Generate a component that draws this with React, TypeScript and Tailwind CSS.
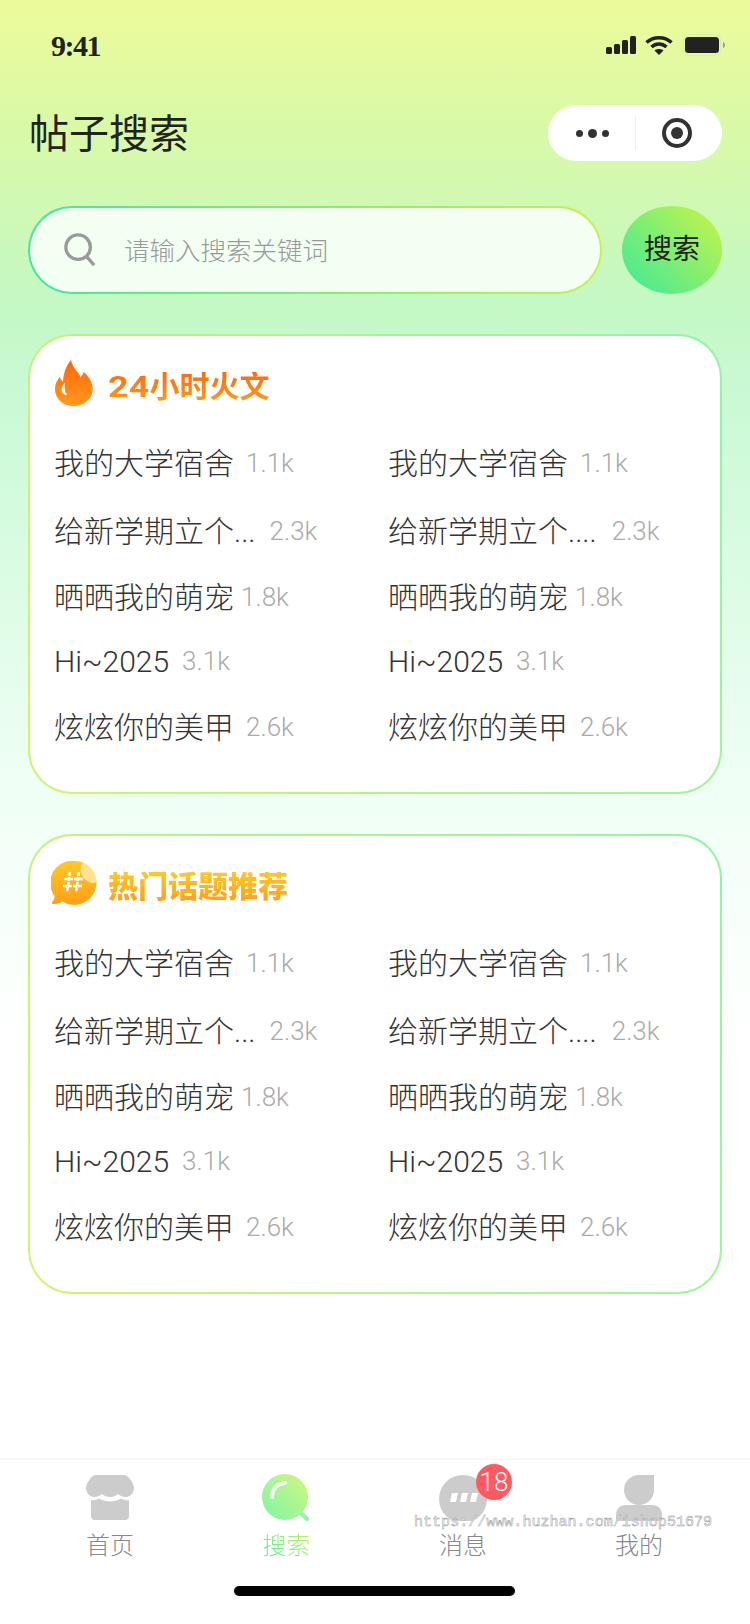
import { ReactNode } from "react";

const rows = [
  { t: "我的大学宿舍", n: "1.1k", ml: "ml-[12px]", ml2: "ml-[12px]" },
  { t: "给新学期立个...", n: "2.3k", ml: "ml-[14px]", ml2: "ml-[15px]" },
  { t: "晒晒我的萌宠", n: "1.8k", ml: "ml-[7px]", ml2: "ml-[7px]" },
  { t: "Hi~2025", n: "3.1k", ml: "ml-[13px]", ml2: "ml-[13px]" },
  { t: "炫炫你的美甲", n: "2.6k", ml: "ml-[12px]", ml2: "ml-[12px]" },
];

function Flame() {
  return (
    <svg width="38" height="46" viewBox="0 0 38 46">
      <defs>
        <linearGradient id="fl" x1="0" y1="0" x2="0" y2="1">
          <stop offset="0" stopColor="#ff6608" />
          <stop offset="1" stopColor="#ff9a1e" />
        </linearGradient>
      </defs>
      <path
        d="M16 0c1 5 3 8 6 11.500 1.500 1.800 2.800 3.500 3.500 5.500 1.500-1.300 2.800-3.300 3.200-5 5 4 9 10.500 9 17 0 9.500-8 17-19 17S0 38.500 0 29c0-5.500 2.500-9.500 5-12 .5 2 1.500 3.500 3 4.500C8.500 13 11 6 16 0z"
        fill="url(#fl)"
      />
      <path d="M10 23c-3 2-4 6-3 9 1 1.800 3 3 5 3-2-2.500-3-7-2-12z" fill="#fff" />
    </svg>
  );
}

function Bubble() {
  return (
    <svg width="46" height="46" viewBox="0 0 46 46">
      <defs>
        <linearGradient id="bb" x1="0" y1="0" x2="0" y2="1">
          <stop offset="0" stopColor="#ffc925" />
          <stop offset="1" stopColor="#ff9f18" />
        </linearGradient>
      </defs>
      <path
        d="M23.500 1a22 22 0 1 1-12 40.500c-2.500 1.500-6 2.800-9.500 2.500-1.500-.3-1.500-1.500-.5-2.500 1.500-1.500 2-3.500 2-5.500A22 22 0 0 1 23.500 1z"
        fill="url(#bb)"
      />
      <path d="M32 2.500a22 22 0 0 1 13.500 20 13 13 0 0 1-13.500-20z" fill="#ffe38f" />
      <path
        d="M19 12l-3 20M28 12l-3 20M13 19h19M12 26h19"
        stroke="#fff"
        strokeWidth="2.500"
        strokeDasharray="4 1"
        fill="none"
      />
    </svg>
  );
}

function StatusIcons() {
  return (
    <div className="flex items-center">
      <svg width="32" height="20" viewBox="0 0 32 20" fill="#222">
        <rect x="1" y="12" width="6" height="7" rx="1.500" />
        <rect x="9" y="9" width="6" height="10" rx="1.500" />
        <rect x="17" y="5" width="6" height="14" rx="1.500" />
        <rect x="25" y="1" width="6" height="18" rx="1.500" />
      </svg>
      <svg className="ml-[8px]" width="28" height="20" viewBox="0 0 28 20" fill="none" stroke="#222" strokeWidth="3.500">
        <path d="M1.500 7.500c7-6.500 18-6.500 25 0" />
        <path d="M6.500 12c4.500-4 10.500-4 15 0" />
        <path d="M14 20l-4.500-4.500c2.500-2 6.500-2 9 0z" fill="#222" stroke="none" />
      </svg>
      <svg className="ml-[10px]" width="44" height="22" viewBox="0 0 44 22">
        <rect x="0.500" y="0.500" width="37" height="21" rx="5" fill="none" stroke="#dcecb0" />
        <rect x="2" y="3" width="34" height="16" rx="3.500" fill="#222" />
        <path d="M40 8c1.500.5 2 2 2 3s-.5 2.500-2 3z" fill="#9aa77a" />
      </svg>
    </div>
  );
}

function Card({ icon, title, titleClass }: { icon: ReactNode; title: ReactNode; titleClass: string }) {
  return (
    <div className="h-[460px] rounded-[44px] bg-[linear-gradient(65deg,#d0f56a,#8ff5a5)] p-[2px]">
      <div className="h-full rounded-[42px] bg-white px-[24px] pt-[24px]">
        <div className="flex h-[50px] items-center">
          <div className="flex w-[54px] shrink-0 items-center">{icon}</div>
          <span className={`mt-[3px] bg-clip-text text-[30px] leading-none text-transparent ${titleClass}`}>
            {title}
          </span>
        </div>
        <div className="mt-[20px] grid grid-cols-[334px_1fr] grid-rows-[66px_70px_62px_66px_66px]">
          {rows.map((r, i) => [
            <div key={`l${i}`} className="flex items-center">
              <span className="text-[30px] font-light text-[#333]">{r.t}</span>
              <span className={`${r.ml} text-[26px] font-light text-[#aaa]`}>{r.n}</span>
            </div>,
            <div key={`r${i}`} className="flex items-center">
              <span className="text-[30px] font-light text-[#333]">{i === 1 ? "给新学期立个...." : r.t}</span>
              <span className={`${r.ml2} text-[26px] font-light text-[#aaa]`}>{r.n}</span>
            </div>,
          ])}
        </div>
      </div>
    </div>
  );
}

export default function App() {
  return (
    <div className="relative flex h-[1624px] w-[750px] flex-col overflow-hidden bg-[linear-gradient(180deg,#ecfb9b_0px,#d8f9a8_140px,#c4f8c4_300px,#c9f9d4_390px,#f0fff6_790px,#ffffff_1050px)] font-['Roboto','Noto_Sans_CJK_SC',sans-serif]">
      {/* STATUS BAR */}
      <div className="flex h-[90px] items-center justify-between pl-[51px] pr-[23px]">
        <span className="font-['Liberation_Serif',serif] text-[30px] font-bold tracking-[-1.500px] text-[#222]">9:41</span>
        <StatusIcons />
      </div>

      {/* NAV */}
      <div className="mt-[15px] flex h-[56px] items-center justify-between pl-[29px] pr-[28px]">
        <h1 className="mt-[4px] text-[40px] font-normal text-[#222]">帖子搜索</h1>
        <div className="flex h-[56px] w-[174px] items-center rounded-full bg-white">
          <div className="flex w-[87px] items-center justify-center gap-[5px] pl-[2px]">
            <span className="size-[7px] rounded-full bg-[#333]" />
            <span className="size-[9px] rounded-full bg-[#333]" />
            <span className="size-[7px] rounded-full bg-[#333]" />
          </div>
          <div className="h-[34px] w-px bg-[#eee]" />
          <div className="flex flex-1 justify-center pr-[5px]">
            <div className="flex size-[30px] items-center justify-center rounded-full border-[4px] border-[#333]">
              <div className="size-[12px] rounded-full bg-[#333]" />
            </div>
          </div>
        </div>
      </div>

      {/* SEARCH */}
      <div className="mt-[45px] flex gap-[20px] pl-[28px] pr-[28px]">
        <div className="h-[88px] w-[574px] rounded-full bg-[linear-gradient(90deg,#42e89c,#c6f24c)] p-[2px]">
          <div className="flex h-full items-center rounded-full bg-[#f4fff3] pl-[34px]">
            <svg width="32" height="34" viewBox="0 0 34 36" fill="none" stroke="#9a9a9a" strokeWidth="3.500">
              <circle cx="15" cy="15" r="13" />
              <path d="M24 25l8 9" />
            </svg>
            <span className="ml-[28px] mt-[3px] text-[25.500px] font-light text-[#999]">请输入搜索关键词</span>
          </div>
        </div>
        <div className="flex h-[88px] w-[100px] items-center justify-center rounded-[50%] bg-[linear-gradient(45deg,#3de89b,#c9f546)] text-[28px] text-[#222]">
          搜索
        </div>
      </div>

      {/* CARDS */}
      <div className="mt-[40px] flex flex-col gap-[40px] px-[28px]">
        <Card
          icon={
            <div className="-mt-[5px] ml-[1px]">
              <Flame />
            </div>
          }
          title={
            <>
              <span className="mr-[7px] inline-block origin-left scale-x-[1.2] bg-[linear-gradient(180deg,#ff6a0a,#ff9a1e)] bg-clip-text text-transparent">24</span>
              小时火文
            </>
          }
          titleClass="font-bold bg-[linear-gradient(180deg,#ff6a0a,#ff9a1e)]"
        />
        <Card
          icon={
            <div className="-ml-[3px] -mt-[4px]">
              <Bubble />
            </div>
          }
          title="热门话题推荐"
          titleClass="font-black bg-[linear-gradient(180deg,#ffc825,#ffa01a)]"
        />
      </div>

      {/* TAB BAR */}
      <div className="absolute inset-x-0 bottom-0 h-[166px] border-t-2 border-[#f7f7f7] bg-white">
        <div className="grid h-[106px] grid-cols-[176px_177px_176px_176px] pl-[22px]">
          <div className="flex flex-col items-center pt-[15px]">
            <svg width="48" height="46" viewBox="0 0 48 46">
              <path d="M10 0h28c4 0 10 8 10 13 0 5-4 9-8 9-3 0-6-1-8-3-2 2-5 3-8 3s-6-1-8-3c-2 2-5 3-8 3-4 0-8-4-8-9C0 8 6 0 10 0z" fill="#ccc" />
              <path d="M5 25c3 .5 6 0 8-1.500 3 2 7.500 3 11 3s8-1 11-3c2 1.500 5 2 8 1.500v16c0 2.500-1.500 4-4 4H9c-2.500 0-4-1.500-4-4z" fill="#ccc" />
            </svg>
            <span className="mt-[9px] text-[24px] font-light leading-[32px] text-[#888]">首页</span>
          </div>
          <div className="flex flex-col items-center pt-[14px]">
            <svg width="50" height="47" viewBox="0 0 50 47">
              <defs>
                <linearGradient id="sr" x1="0" y1="1" x2="1" y2="0">
                  <stop offset="0" stopColor="#7df5a8" />
                  <stop offset="1" stopColor="#d2f77f" />
                </linearGradient>
              </defs>
              <path d="M37 37l8 8" stroke="#8ff5a0" strokeWidth="4" strokeLinecap="round" />
              <circle cx="23" cy="23" r="23" fill="url(#sr)" />
              <path d="M10 23c0-8 5-13 13-14" stroke="#fff" strokeWidth="4" strokeLinecap="round" fill="none" />
            </svg>
            <span className="mt-[9px] bg-[linear-gradient(45deg,#52ea9c,#c6f25a)] bg-clip-text text-[24px] font-light leading-[32px] text-transparent">搜索</span>
          </div>
          <div className="relative flex flex-col items-center pt-[15px]">
            <svg width="48" height="46" viewBox="0 0 48 46">
              <circle cx="24" cy="24" r="24" fill="#ccc" />
              <path d="M13 18h6l-2 9h-6zM23 18h6l-2 9h-6zM33 18h6l-2 9h-6z" fill="#fff" />
            </svg>
            <span className="mt-[9px] text-[24px] font-light leading-[32px] text-[#888]">消息</span>
            <span className="absolute left-[101px] top-[4px] flex size-[36px] items-center justify-center rounded-full bg-[#ff5a64] text-[26px] font-light text-white">18</span>
          </div>
          <div className="flex flex-col items-center pt-[15px]">
            <svg width="46" height="46" viewBox="0 0 46 46" fill="#ccc">
              <path d="M23 0h15v14a15 15 0 1 1-15-14z" />
              <path d="M10 30h26c6 0 10 4 10 10v6H0v-6c0-6 4-10 10-10z" />
            </svg>
            <span className="mt-[9px] text-[24px] font-light leading-[32px] text-[#888]">我的</span>
          </div>
        </div>
        <div className="ml-[234px] mt-[20px] h-[10px] w-[281px] rounded-full bg-black" />
      </div>

      {/* WATERMARK */}
      <div className="absolute left-[414px] top-[1512px] font-['Liberation_Mono',monospace] text-[15px] tracking-[0.03px] text-white [-webkit-text-stroke:0.5px_#999]">
        https://www.huzhan.com/ishop51679
      </div>
    </div>
  );
}
